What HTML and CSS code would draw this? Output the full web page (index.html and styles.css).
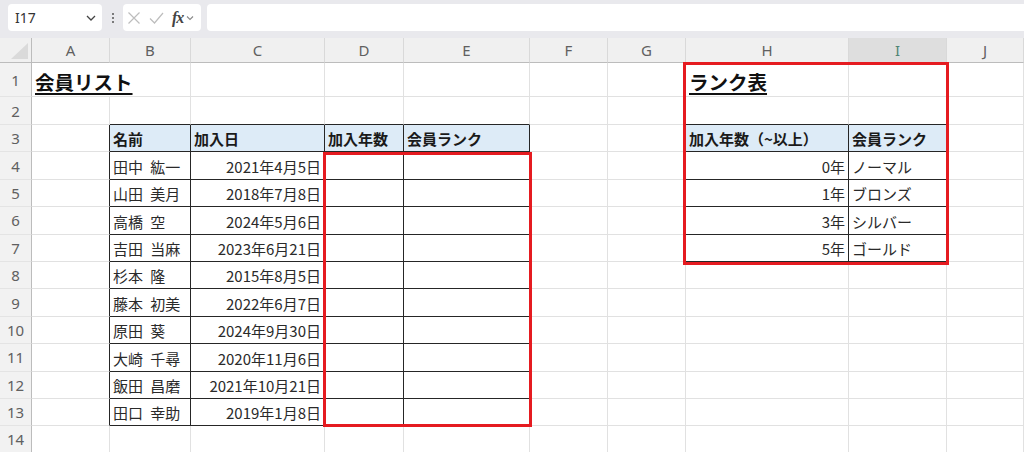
FILE: index.html
```html
<!DOCTYPE html>
<html lang="ja">
  <head>
    <meta charset="UTF-8" />
    <title>会員リスト</title>
    <link rel="stylesheet" href="styles.css">
  </head>
  <body>
    <div class="toolbar">
      <div class="name-box">
        <span>I17</span>
        <svg class="chev" width="10" height="6" viewBox="0 0 10 6"><path d="M1 1l4 4 4-4" fill="none" stroke="#444" stroke-width="1.3"/></svg>
      </div>
      <div class="dots"><i></i><i></i><i></i></div>
      <div class="fx-box">
        <svg width="14" height="14" viewBox="0 0 14 14"><path d="M1.5 1.5l11 11M12.5 1.5l-11 11" stroke="#bdbdbd" stroke-width="1.2"/></svg>
        <svg width="15" height="14" viewBox="0 0 15 14"><path d="M1 7.5l4.5 4.5 8.5-10" fill="none" stroke="#bdbdbd" stroke-width="1.2"/></svg>
        <span class="fx">fx</span>
        <svg class="chev" width="8" height="6" viewBox="0 0 8 6"><path d="M1 1.5l3 3 3-3" fill="none" stroke="#888" stroke-width="1.1"/></svg>
      </div>
      <div class="formula"></div>
    </div>

    <div class="sheet">
      <!-- column headers -->
      <div class="hd corner"><span class="tri"></span></div>
      <div class="hd">A</div>
      <div class="hd">B</div>
      <div class="hd">C</div>
      <div class="hd">D</div>
      <div class="hd">E</div>
      <div class="hd">F</div>
      <div class="hd">G</div>
      <div class="hd">H</div>
      <div class="hd sel">I</div>
      <div class="hd">J</div>

      <!-- 1 -->
      <div class="rh">1</div>
      <div class="c span2"><span class="title">会員リスト</span></div>
      <div class="c"></div><div class="c"></div><div class="c"></div><div class="c"></div><div class="c"></div>
      <div class="c"><span class="title">ランク表</span></div>
      <div class="c"></div><div class="c"></div>

      <!-- 2 -->
      <div class="rh">2</div>
      <div class="c"></div>
      <div class="c tt"></div><div class="c tt"></div><div class="c tt"></div><div class="c tt"></div>
      <div class="c"></div><div class="c"></div>
      <div class="c tt"></div><div class="c tt"></div>
      <div class="c"></div>

      <!-- 3 -->
      <div class="rh">3</div>
      <div class="c tl"></div>
      <div class="c t th">名前</div>
      <div class="c t th">加入日</div>
      <div class="c t th">加入年数</div>
      <div class="c t th">会員ランク</div>
      <div class="c"></div>
      <div class="c tl"></div>
      <div class="c t th">加入年数（~以上）</div>
      <div class="c t th">会員ランク</div>
      <div class="c"></div>

      <!-- 4 -->
      <div class="rh">4</div>
      <div class="c tl"></div>
      <div class="c t">田中 紘一</div>
      <div class="c t num">2021年4月5日</div>
      <div class="c t"></div><div class="c t"></div>
      <div class="c"></div>
      <div class="c tl"></div>
      <div class="c t num">0年</div>
      <div class="c t">ノーマル</div>
      <div class="c"></div>

      <!-- 5 -->
      <div class="rh">5</div>
      <div class="c tl"></div>
      <div class="c t">山田 美月</div>
      <div class="c t num">2018年7月8日</div>
      <div class="c t"></div><div class="c t"></div>
      <div class="c"></div>
      <div class="c tl"></div>
      <div class="c t num">1年</div>
      <div class="c t">ブロンズ</div>
      <div class="c"></div>

      <!-- 6 -->
      <div class="rh">6</div>
      <div class="c tl"></div>
      <div class="c t">高橋 空</div>
      <div class="c t num">2024年5月6日</div>
      <div class="c t"></div><div class="c t"></div>
      <div class="c"></div>
      <div class="c tl"></div>
      <div class="c t num">3年</div>
      <div class="c t">シルバー</div>
      <div class="c"></div>

      <!-- 7 -->
      <div class="rh">7</div>
      <div class="c tl"></div>
      <div class="c t">吉田 当麻</div>
      <div class="c t num">2023年6月21日</div>
      <div class="c t"></div><div class="c t"></div>
      <div class="c"></div>
      <div class="c tl"></div>
      <div class="c t num">5年</div>
      <div class="c t">ゴールド</div>
      <div class="c"></div>

      <!-- 8 -->
      <div class="rh">8</div>
      <div class="c tl"></div>
      <div class="c t">杉本 隆</div>
      <div class="c t num">2015年8月5日</div>
      <div class="c t"></div><div class="c t"></div>
      <div class="c"></div><div class="c"></div><div class="c"></div><div class="c"></div><div class="c"></div>

      <!-- 9 -->
      <div class="rh">9</div>
      <div class="c tl"></div>
      <div class="c t">藤本 初美</div>
      <div class="c t num">2022年6月7日</div>
      <div class="c t"></div><div class="c t"></div>
      <div class="c"></div><div class="c"></div><div class="c"></div><div class="c"></div><div class="c"></div>

      <!-- 10 -->
      <div class="rh">10</div>
      <div class="c tl"></div>
      <div class="c t">原田 葵</div>
      <div class="c t num">2024年9月30日</div>
      <div class="c t"></div><div class="c t"></div>
      <div class="c"></div><div class="c"></div><div class="c"></div><div class="c"></div><div class="c"></div>

      <!-- 11 -->
      <div class="rh">11</div>
      <div class="c tl"></div>
      <div class="c t">大崎 千尋</div>
      <div class="c t num">2020年11月6日</div>
      <div class="c t"></div><div class="c t"></div>
      <div class="c"></div><div class="c"></div><div class="c"></div><div class="c"></div><div class="c"></div>

      <!-- 12 -->
      <div class="rh">12</div>
      <div class="c tl"></div>
      <div class="c t">飯田 昌磨</div>
      <div class="c t num">2021年10月21日</div>
      <div class="c t"></div><div class="c t"></div>
      <div class="c"></div><div class="c"></div><div class="c"></div><div class="c"></div><div class="c"></div>

      <!-- 13 -->
      <div class="rh">13</div>
      <div class="c tl"></div>
      <div class="c t">田口 幸助</div>
      <div class="c t num">2019年1月8日</div>
      <div class="c t"></div><div class="c t"></div>
      <div class="c"></div><div class="c"></div><div class="c"></div><div class="c"></div><div class="c"></div>

      <!-- 14 -->
      <div class="rh">14</div>
      <div class="c"></div><div class="c"></div><div class="c"></div><div class="c"></div><div class="c"></div>
      <div class="c"></div><div class="c"></div><div class="c"></div><div class="c"></div><div class="c"></div>

      <!-- highlight frames -->
      <div class="frame frame-list"></div>
      <div class="frame frame-rank"></div>
    </div>
  </body>
</html>
```

FILE: styles.css
```css
:root {
  --grid: #e1e1e1;
  --line: #262626;
  --head-bg: #f0f0f0;
  --fill: #ddebf7;
  --red: #e51b20;
  font-family: "Noto Sans CJK JP", "Noto Sans", sans-serif;
}

* {
  box-sizing: border-box;
}

body {
  margin: 0;
  width: 1024px;
  height: 452px;
  overflow: hidden;
  background: #ffffff;
  color: #2a2a2a;
}

/* formula bar */
.toolbar {
  height: 38px;
  background: #e9e9ed;
  display: flex;
  align-items: flex-start;
  padding: 4px 0 0 8px;
}

.name-box {
  width: 94px;
  height: 27px;
  background: #ffffff;
  border-radius: 4px;
  display: flex;
  align-items: center;
  justify-content: space-between;
  padding: 0 6px 0 7px;
  font-family: "Noto Sans", sans-serif;
  font-size: 14px;
  color: #333333;
}

.dots {
  width: 21px;
  height: 27px;
  display: flex;
  flex-direction: column;
  align-items: center;
  justify-content: center;
  gap: 2px;
}

.dots i {
  width: 2px;
  height: 2px;
  background: #555555;
  border-radius: 50%;
}

.fx-box {
  width: 78px;
  height: 27px;
  background: #ffffff;
  border-radius: 4px;
  display: flex;
  align-items: center;
  gap: 8px;
  padding-left: 4px;
}

.fx {
  font-family: "Liberation Serif", serif;
  font-style: italic;
  font-weight: bold;
  font-size: 16px;
  color: #444444;
  margin-right: -5px;
  letter-spacing: -1px;
}

.formula {
  flex: 1;
  height: 27px;
  margin-left: 6px;
  background: #ffffff;
  border-radius: 4px 0 0 4px;
}

/* worksheet */
.sheet {
  position: relative;
  display: grid;
  grid-template-columns: 32px 78px 81px 134px 79px 126px 78px 78px 163px 98px 1fr;
  grid-template-rows: 25px 34px 28px repeat(12, 27.4px);
}

.hd {
  background: var(--head-bg);
  border-right: 1px solid #d9d9d9;
  border-bottom: 1px solid #bcbcbc;
  display: flex;
  align-items: center;
  justify-content: center;
  font-family: "Noto Sans", sans-serif;
  font-size: 15px;
  color: #606060;
}

.hd.sel {
  background: #dedede;
  color: #4f8474;
}

.corner {
  position: relative;
  border-right-color: #bcbcbc;
}

.tri {
  position: absolute;
  right: 3px;
  bottom: 3px;
  width: 0;
  height: 0;
  border-left: 17px solid transparent;
  border-bottom: 16px solid #dadada;
}

.rh {
  background: #f2f2f2;
  border-right: 1px solid #bcbcbc;
  border-bottom: 1px solid #e4e4e4;
  display: flex;
  align-items: center;
  justify-content: center;
  font-family: "Noto Sans", sans-serif;
  font-size: 15px;
  color: #606060;
}

.c {
  border-right: 1px solid var(--grid);
  border-bottom: 1px solid var(--grid);
  display: flex;
  align-items: flex-end;
  padding: 0 3px 3px;
  font-size: 15px;
  line-height: 19px;
  word-spacing: 4px;
  white-space: nowrap;
  overflow: visible;
}

.span2 {
  grid-column: span 2;
}

.t {
  border-right-color: var(--line);
  border-bottom-color: var(--line);
}

.tt {
  border-bottom-color: var(--line);
}

.tl {
  border-right-color: var(--line);
}

.th {
  background: var(--fill);
  font-weight: bold;
  color: #1a1a1a;
}

.num {
  justify-content: flex-end;
}

.title {
  font-size: 19.5px;
  font-weight: bold;
  text-decoration: underline;
  text-underline-offset: 3px;
  text-decoration-thickness: 2px;
  color: #111111;
  margin-bottom: 2px;
}

.frame {
  position: absolute;
  border: 3px solid var(--red);
  pointer-events: none;
}

.frame-list {
  left: 323px;
  top: 114px;
  width: 209px;
  height: 275px;
}

.frame-rank {
  left: 683px;
  top: 24px;
  width: 266px;
  height: 203px;
}
```
